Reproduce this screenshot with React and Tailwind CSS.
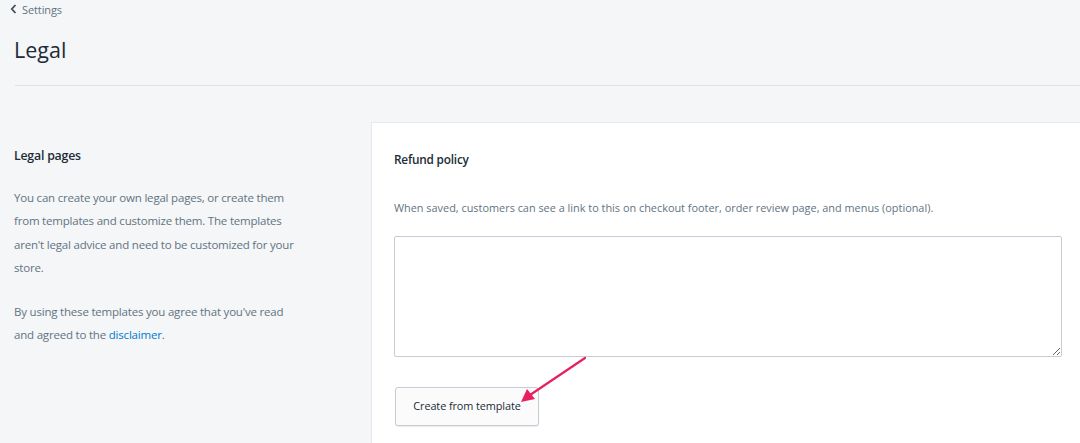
import React from "react";

export default function App() {
  return (
    <div className="relative w-full h-[443px] overflow-hidden bg-[#f4f6f8] text-[#212b36]" style={{ fontFamily: '"Open Sans", "Noto Sans", sans-serif' }}>
      <div className="pl-[10px] pt-[2px] h-[18px] flex items-center gap-[5px] text-[11px] tracking-[-0.1px] text-[#637381]">
        <svg width="7" height="10" viewBox="0 0 7 10" className="mt-[-2px]"><path d="M5.5 1 L1.8 5 L5.5 9" fill="none" stroke="#454f5b" strokeWidth="1.8" /></svg>
        <span>Settings</span>
      </div>
      <h1 className="pl-[14px] mt-[19px] text-[21.5px] leading-[26px] font-normal text-[#212b36]">Legal</h1>
      <div className="ml-[15px] mt-[22px] border-t border-[#dfe3e8]" />
      <div className="flex mt-[36px]">
        <div className="w-[371px] shrink-0 pl-[14px] pt-[25px] pr-[72px]">
          <h2 className="text-[12.3px] leading-[18px] font-semibold tracking-[-0.2px] text-[#212b36]">Legal pages</h2>
          <p className="mt-[21px] text-[11.5px] leading-[23.3px] tracking-[-0.2px] text-[#637381]">
            You can create your own legal pages, or create them from templates and customize them. The templates aren't legal advice and need to be customized for your store.
          </p>
          <p className="mt-[21px] text-[11.5px] leading-[23.3px] tracking-[-0.2px] text-[#637381]">
            By using these templates you agree that you've read and agreed to the <span className="text-[#007ace]">disclaimer</span>.
          </p>
        </div>
        <div className="flex-1 h-[330px] bg-white border-l border-t border-[#e6e9ec] pl-[22px] pt-[27px]">
          <h3 className="text-[11.8px] leading-[18px] font-semibold tracking-[-0.2px] text-[#212b36]">Refund policy</h3>
          <p className="mt-[32px] text-[10.9px] leading-[16px] text-[#637381]">
            When saved, customers can see a link to this on checkout footer, order review page, and menus (optional).
          </p>
          <textarea className="block mt-[20px] w-[668px] h-[121px] border border-[#c4cdd5] rounded-[2px] bg-white" />
          <button className="mt-[30px] ml-[1px] w-[144px] h-[39px] rounded-[3px] border border-[#c4cdd5] bg-[#fbfbfc] shadow-[0_1px_1px_rgba(22,29,37,0.08)] text-[10.9px] tracking-[-0.1px] text-[#212b36]">
            Create from template
          </button>
        </div>
      </div>
      <svg className="absolute left-0 top-0 pointer-events-none" width="1080" height="443">
        <line x1="585" y1="358" x2="530" y2="395" stroke="#e8205e" strokeWidth="2.2" strokeLinecap="round" />
        <polygon points="521,402 527,389 535,399" fill="#e8205e" />
      </svg>
    </div>
  );
}
